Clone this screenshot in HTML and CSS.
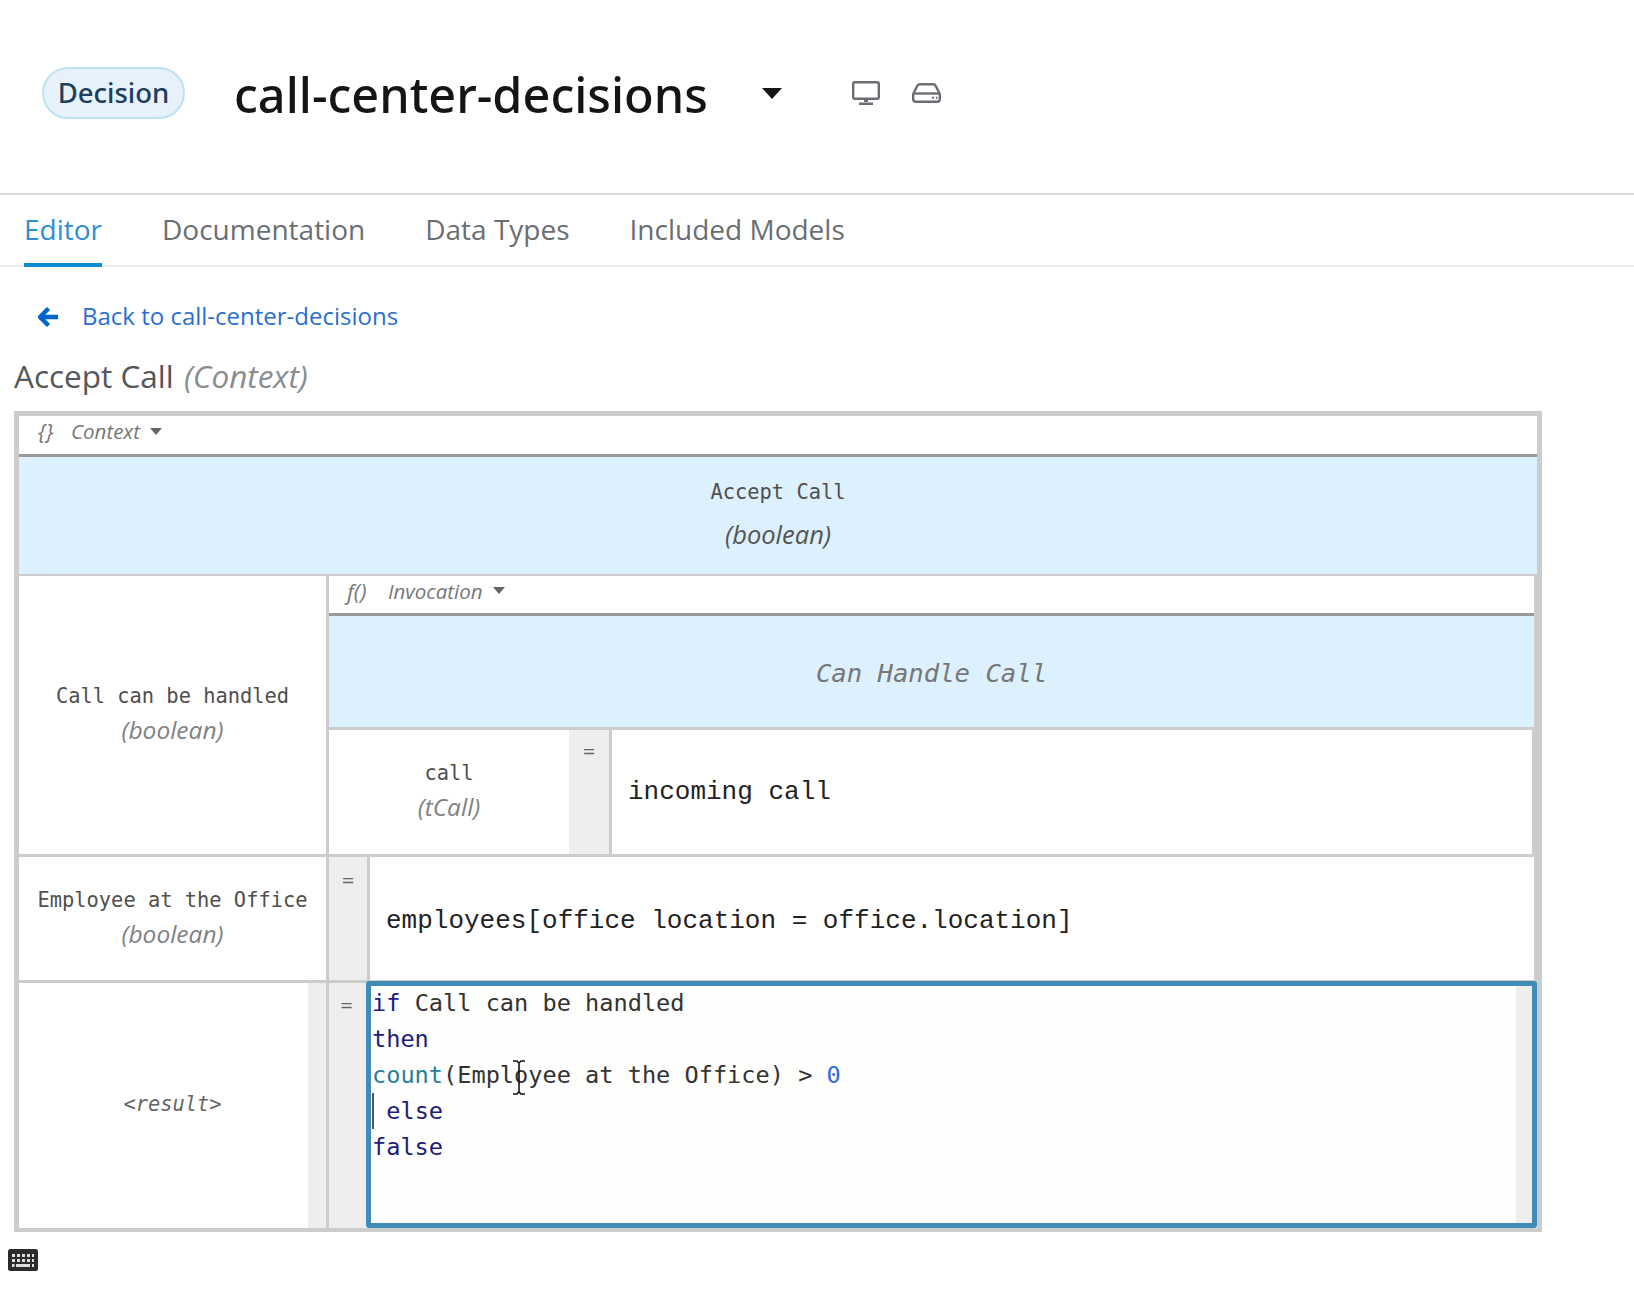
FILE: index.html
```html
<!DOCTYPE html>
<html lang="en">
<head>
  <meta charset="UTF-8" />
  <title>call-center-decisions</title>
  <link rel="stylesheet" href="styles.css">
</head>
<body>

  <header class="top">
    <span class="pill">Decision</span>
    <h1 class="name">call-center-decisions</h1>
    <span class="name-caret"></span>
    <svg class="ico ico-screen" viewBox="0 0 28 25" width="28" height="25">
      <rect x="1.2" y="1.2" width="25.6" height="16.6" rx="1.5" fill="none" stroke="#6a6e73" stroke-width="2.4"/>
      <path d="M12 18h4v3h-4zM7 21.5h14V24H7z" fill="#6a6e73"/>
    </svg>
    <svg class="ico ico-drive" viewBox="0 0 29 20" width="29" height="20">
      <path d="M1.2 11 5.5 2.6Q6 1.2 8 1.2h13q2 0 2.5 1.4l4.3 8.4v5q0 2.8-2.6 2.8H3.8q-2.6 0-2.6-2.8z" fill="none" stroke="#6a6e73" stroke-width="2.4"/>
      <path d="M1.5 10.5h26" stroke="#6a6e73" stroke-width="2.4"/>
      <path d="M20 14.8h2M24 14.8h1.5" stroke="#6a6e73" stroke-width="2"/>
    </svg>
  </header>

  <nav class="tabs">
    <a class="tab tab-on">Editor</a>
    <a class="tab">Documentation</a>
    <a class="tab">Data Types</a>
    <a class="tab">Included Models</a>
  </nav>

  <a class="back">
    <svg viewBox="0 0 21 20" width="21" height="20">
      <path d="M10.5 1.5 2 10l8.5 8.5M3 10h17" fill="none" stroke="#06c" stroke-width="4.4" stroke-linejoin="miter"/>
    </svg>
    Back to call-center-decisions
  </a>

  <h2 class="expr-title">Accept Call <em>(Context)</em></h2>

  <section class="ctx">
    <div class="bar"><i class="bar-sym">{}</i><i class="bar-name">Context</i><span class="bar-caret"></span></div>
    <div class="head">
      <div class="mono">Accept Call</div>
      <div class="type type-big">(boolean)</div>
    </div>

    <div class="row row-handled">
      <div class="label">
        <div class="mono">Call can be handled</div>
        <div class="type">(boolean)</div>
      </div>
      <div class="invoke">
        <div class="bar bar-sub"><i class="bar-sym">f()</i><i class="bar-name">Invocation</i><span class="bar-caret"></span></div>
        <div class="fn">Can Handle Call</div>
        <div class="bind">
          <div class="label label-call">
            <div class="mono">call</div>
            <div class="type">(tCall)</div>
          </div>
          <div class="eq eq-bind">=</div>
          <div class="val val-call">incoming call</div>
        </div>
      </div>
    </div>

    <div class="row row-emp">
      <div class="label">
        <div class="mono">Employee at the Office</div>
        <div class="type">(boolean)</div>
      </div>
      <div class="eq">=</div>
      <div class="val val-emp">employees[office location = office.location]</div>
    </div>

    <div class="row row-result">
      <div class="label label-result">
        <div class="mono mono-it">&lt;result&gt;</div>
      </div>
      <div class="eq">=</div>
      <div class="editor">
        <div class="ln"><span class="kw">if</span> Call can be handled</div>
        <div class="ln"><span class="kw">then</span></div>
        <div class="ln"><span class="fnc">count</span>(Employee at the Office) &gt; <span class="num">0</span></div>
        <div class="ln ln-caret"> <span class="kw">else</span></div>
        <div class="ln"><span class="kw">false</span></div>
        <svg class="ibeam" viewBox="0 0 14 35" width="14" height="35">
          <path d="M1 1h4l2 2 2-2h4M1 34h4l2-2 2 2h4M7 3v29" fill="none" stroke="#111" stroke-width="1.6"/>
        </svg>
      </div>
    </div>
  </section>

  <svg class="kbd" viewBox="0 0 30 22" width="30" height="22">
    <rect width="30" height="22" rx="2.5" fill="#2b2b2b"/>
    <path d="M4 5h3v3H4zM9 5h3v3H9zM14 5h3v3h-3zM19 5h3v3h-3zM24 5h2v3h-2zM4 10h3v3H4zM9 10h3v3H9zM14 10h3v3h-3zM19 10h3v3h-3zM24 10h2v3h-2zM4 15h2.5v3H4zM8 15h14v3H8zM24 15h2v3h-2z" fill="#ddd"/>
  </svg>

</body>
</html>
```

FILE: styles.css
```css
body{
  margin:0;
  background:#fff;
  font-family:"Open Sans",sans-serif;
  color:#151515
}

/* header */
.top{
  display:flex;
  align-items:center;
  height:195px;
  box-sizing:border-box;
  padding:0 0 7px 42px;
  border-bottom:2px solid #ddd
}
.pill{
  width:143px;
  height:52px;
  box-sizing:border-box;
  border:2px solid #bee1f4;
  border-radius:26px;
  background:#e7f1fa;
  color:#1d3f5e;
  font:500 27.5px/47px "Noto Sans",sans-serif;
  text-align:center
}
.name{
  margin:2px 0 0 49px;
  width:477px;
  font:500 48.6px/60px "Noto Sans",sans-serif;
  white-space:nowrap;
  color:#151515
}
.name-caret{
  margin-left:51px;
  border-top:11px solid #151515;
  border-left:10px solid transparent;
  border-right:10px solid transparent
}
.ico-screen{margin-left:70px}
.ico-drive{margin-left:32px}

/* tabs */
.tabs{
  display:flex;
  gap:60px;
  height:72px;
  box-sizing:border-box;
  padding-left:24px;
  border-bottom:2px solid #eee
}
.tab{
  height:72px;
  box-sizing:border-box;
  font-size:28px;
  line-height:69px;
  color:#6a6e73
}
.tab-on{
  color:#2b8fd1;
  border-bottom:4px solid #0e8ad6
}

/* link and title */
.back{
  display:flex;
  align-items:center;
  gap:23px;
  height:40px;
  margin:28px 0 0 38px;
  color:#2a6fd0;
  font-size:24px
}
.back svg{margin-top:3px}
.expr-title{
  margin:21px 0 0 14px;
  font-size:31.5px;
  font-weight:400;
  line-height:40px;
  color:#55585b
}
.expr-title em{color:#8a8d90;margin-left:2px}

/* context table */
.ctx{
  width:1528px;
  height:821px;
  box-sizing:border-box;
  margin:15px 0 0 14px;
  border:5px solid #ccc;
  border-bottom-width:4px;
  color:#555
}
.bar{
  display:flex;
  align-items:center;
  height:30px;
  padding:0 0 8px 19px;
  border-bottom:3px solid #999;
  font-size:20.5px;
  color:#777
}
.bar-sym{width:33px;font-size:22px}
.bar-name{margin-right:10px}
.bar-caret{
  border-top:7px solid #666;
  border-left:6px solid transparent;
  border-right:6px solid transparent
}
.bar-sub{height:29px;padding-left:18px}
.bar-sub .bar-sym{width:41px}
.head{
  height:119px;
  box-sizing:border-box;
  padding-top:18px;
  background:#dcf0fd;
  border-bottom:2px solid #ccc;
  text-align:center
}
.mono{
  font:20.4px/34px "DejaVu Sans Mono",monospace;
  color:#4f4f4f
}
.mono-it{font-style:italic;color:#666}
.type{
  font-size:24.5px;
  font-style:italic;
  line-height:34px;
  color:#808285
}
.type-big{color:#555;line-height:50px;font-size:25.5px}

.row{
  display:flex;
  border-right:3px solid #ccc;
  border-bottom:3px solid #ccc
}
.row-handled{height:278px}
.row-emp{height:123px}
.row-result{height:245px;border:0}
.label{
  flex:0 0 auto;
  width:310px;
  box-sizing:border-box;
  display:flex;
  flex-direction:column;
  justify-content:center;
  padding-bottom:4px;
  border-right:3px solid #ccc;
  text-align:center
}
.invoke{flex:1;display:flex;flex-direction:column;min-width:0}
.fn{
  height:111px;
  background:#dcf0fd;
  border-bottom:3px solid #ccc;
  font:italic 25.6px/114px "DejaVu Sans Mono",monospace;
  color:#777;
  text-align:center
}
.bind{flex:1;display:flex}
.label-call{width:240px;border-right:0}
.eq{
  flex:0 0 auto;
  width:41px;
  box-sizing:border-box;
  padding-top:4px;
  background:#eee;
  border-right:3px solid #ccc;
  color:#666;
  font-size:22px;
  line-height:36px;
  text-align:center
}
.eq-bind{width:43px;padding-top:2px}
.val{
  flex:1;
  display:flex;
  align-items:center;
  padding-left:16px;
  font:26px/36px "Liberation Mono",monospace;
  color:#222
}
.val-call{border-right:2px solid #ccc}
.val-emp{padding-top:4px}

/* result row */
.label-result{position:relative}
.label-result::after{
  content:"";
  position:absolute;
  top:0;
  right:0;
  bottom:0;
  width:18px;
  background:#eee
}
.row-result .eq{width:37px;padding-top:3px;padding-right:2px;border-right:0}
.editor{
  position:relative;
  flex:1;
  min-width:0;
  height:247px;
  box-sizing:border-box;
  margin-top:-2px;
  border:5px solid #3f8db5;
  border-radius:3px;
  background:linear-gradient(to left,#eee 16px,#fefefd 16px);
  color:#333;
  font:23.6px/36px "DejaVu Sans Mono",monospace;
  padding:0 0 0 1px
}
.ln{white-space:pre}
.ln:first-child{margin-top:-1px}
.kw{color:#1d1d80}
.fnc{color:#267f99}
.num{color:#2a6be0}
.ln-caret{position:relative}
.ln-caret::before{
  content:"";
  position:absolute;
  left:0;
  top:0;
  width:2px;
  height:36px;
  background:#555
}
.ibeam{position:absolute;left:141px;top:74px}

.kbd{display:block;margin:17px 0 0 8px}
```
